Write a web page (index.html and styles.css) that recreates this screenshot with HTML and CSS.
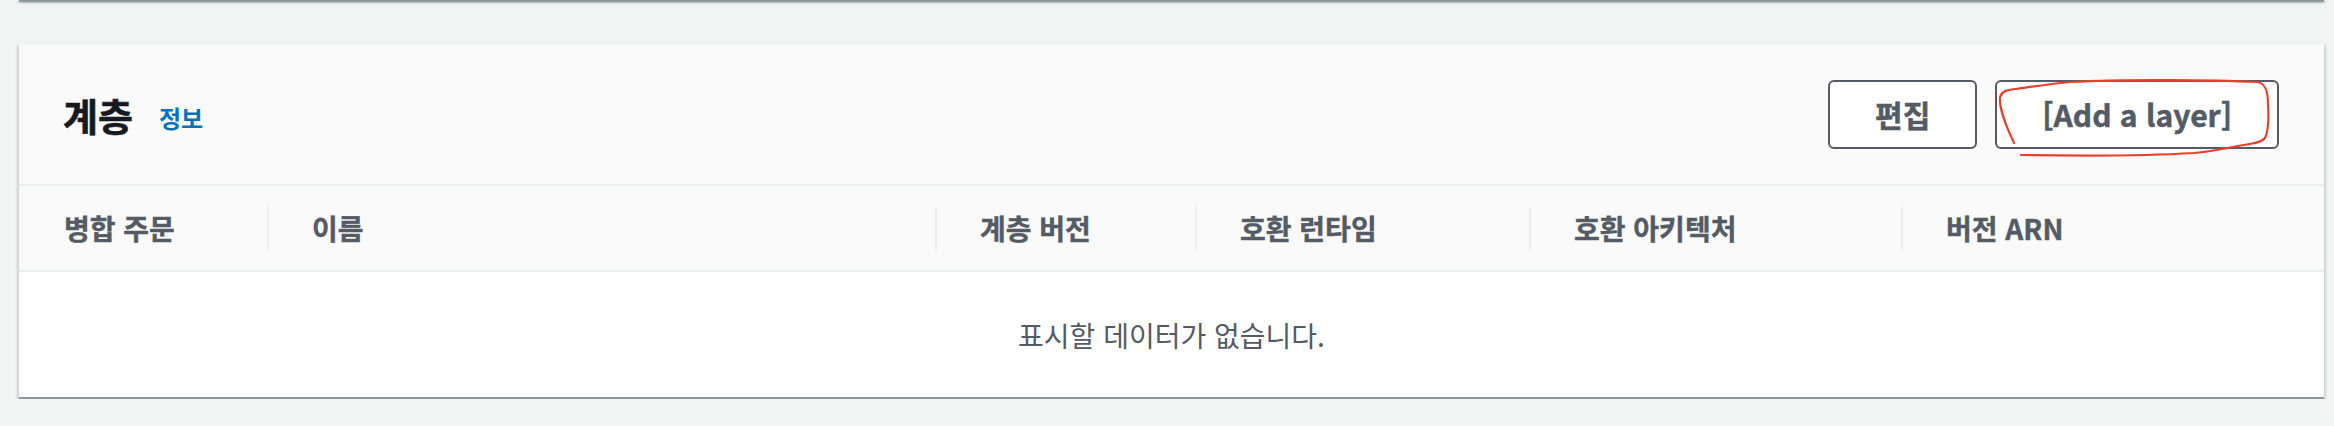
FILE: index.html
```html
<!DOCTYPE html>
<html lang="ko">
<head>
<meta charset="UTF-8">
<title>계층</title>
<link rel="stylesheet" href="styles.css">
</head>
<body>
	<div class="prev-card"></div>
	<section class="card">
		<div class="card-head">
			<h2 class="title">계층<a class="info" href="#">정보</a></h2>
			<div class="actions">
				<button class="btn">편집</button>
				<button class="btn btn-add">[Add a layer]
					<svg class="scribble" width="290" height="80" viewBox="0 0 290 80">
						<path d="M19 63 C12 48 4 30 5 17 C7 11 12 10 20 9 C35 7 55 4 76 2 C130 -1 220 0 262 2 C270 3 273 10 273 24 C274 40 273 52 270 58 C267 62 262 63 255 64 C240 66 222 71 199 73 C150 76 80 76 26 75" />
					</svg>
				</button>
			</div>
		</div>
		<table class="grid">
			<colgroup>
				<col style="width:248px">
				<col style="width:668px">
				<col style="width:260px">
				<col style="width:334px">
				<col style="width:372px">
				<col style="width:423px">
			</colgroup>
			<thead>
				<tr>
					<th class="first"><div class="cell">병합 주문</div></th>
					<th><div class="cell">이름</div></th>
					<th><div class="cell">계층 버전</div></th>
					<th><div class="cell">호환 런타임</div></th>
					<th><div class="cell">호환 아키텍처</div></th>
					<th><div class="cell">버전 ARN</div></th>
				</tr>
			</thead>
			<tbody>
				<tr>
					<td class="empty" colspan="6">표시할 데이터가 없습니다.</td>
				</tr>
			</tbody>
		</table>
	</section>
</body>
</html>
```
FILE: styles.css
```css
*{margin: 0;padding: 0;box-sizing: border-box;}
body{
	background: #f2f3f3;
	padding: 0 10px 0 19px;
	font-family: "Noto Sans CJK KR", "Noto Sans", sans-serif;
	color: #16191f;
}
/* 위쪽 카드의 아래 끝부분 */
.prev-card{
	height: 2px;
	background: #8d9899;
	box-shadow: 2px 1px 2px 0 rgba(0,28,36,.15), -2px 1px 2px 0 rgba(0,28,36,.15);
}
.card{
	margin-top: 42px;
	background: #fff;
	border-bottom: 2px solid #8d9899;
	box-shadow: 2px 1px 2px 0 rgba(0,28,36,.15), -2px 1px 2px 0 rgba(0,28,36,.15);
}
.card-head{
	height: 142px;
	background: #fafafa;
	border-bottom: 2px solid #eaeded;
	display: flex;
	align-items: center;
	justify-content: space-between;
	padding: 0 45px 0 44px;
}
.title{
	font-size: 38px;
	font-weight: 700;
	-webkit-text-stroke: 0.6px #16191f;
	display: flex;
	align-items: center;
	gap: 26px;
}
.info{
	font-size: 24px;
	font-weight: 700;
	color: #0073bb;
	-webkit-text-stroke: 0;
	text-decoration: none;
	padding-top: 6px;
}
.actions{
	display: flex;
	gap: 18px;
}
.btn{
	height: 69px;
	padding: 0 45px;
	border: 2px solid #545b64;
	border-radius: 6px;
	background: #fff;
	color: #545b64;
	font: 700 30px "Noto Sans CJK KR", "Noto Sans", sans-serif;
	-webkit-text-stroke: 0.5px #545b64;
}
.btn-add{
	position: relative;
}
.scribble{
	position: absolute;
	left: -2px;
	top: -2px;
	overflow: visible;
}
.scribble path{
	fill: none;
	stroke: #e8402a;
	stroke-width: 2.2;
	stroke-linecap: round;
}
.grid{
	width: 100%;
	table-layout: fixed;
	border-collapse: collapse;
}
.grid th{
	height: 85px;
	background: #fafafa;
	border-bottom: 2px solid #eaeded;
	text-align: left;
	font-size: 28px;
	font-weight: 700;
	color: #545b64;
	-webkit-text-stroke: 0.4px #545b64;
	padding: 0;
}
.grid th .cell{
	height: 43px;
	line-height: 43px;
	border-left: 2px solid #eaeded;
	padding-left: 43px;
	white-space: nowrap;
}
.grid th.first .cell{
	border-left: 0;
	padding-left: 45px;
}
.grid td.empty{
	height: 126px;
	text-align: center;
	font-size: 28px;
	color: #545b64;
}
```
